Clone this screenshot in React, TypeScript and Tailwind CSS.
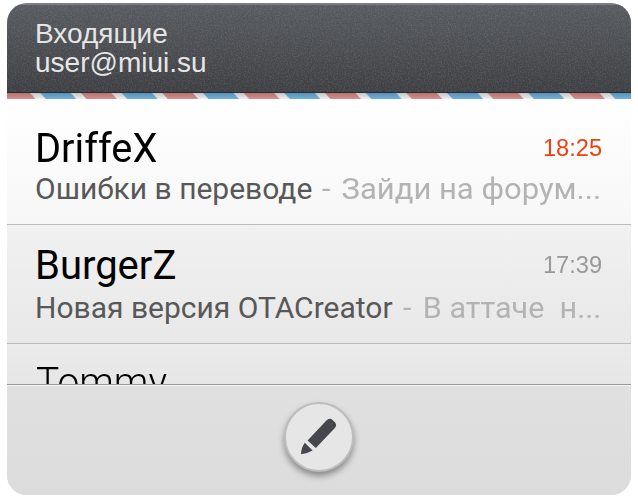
import React from "react";

function Header() {
  return (
    <header className="relative h-[90px] shrink-0 border-t-2 border-b border-t-[#7b7f83] border-b-[#2b2c2f] bg-linear-to-b from-[#575b5f] to-[#3d3e42] pt-[14px] pl-[28px] font-['Liberation_Sans',sans-serif] text-[28px] leading-[29px] text-[#e6e6e6]">
      <svg className="absolute inset-0 h-full w-full opacity-20" aria-hidden="true">
        <filter id="grain">
          <feTurbulence type="fractalNoise" baseFrequency="0.7" numOctaves="2" seed="4" />
          <feColorMatrix values="0 0 0 0 0.62  0 0 0 0 0.66  0 0 0 0 0.68  1.6 0 0 0 -0.6" />
        </filter>
        <rect width="100%" height="100%" filter="url(#grain)" />
      </svg>
      <div className="relative w-max">Входящие</div>
      <div className="relative w-max">user@miui.su</div>
    </header>
  );
}

function AirmailStripe() {
  return (
    <svg className="block h-[6px] w-full shrink-0" aria-hidden="true">
      <defs>
        <pattern id="airmail" x="-7.4" width="81.35" height="6" patternUnits="userSpaceOnUse">
          <path d="M0 0H30.5L36 6H5.5Z" fill="#dd918e" />
          <path d="M40.7 0H71.2L76.7 6H46.2Z" fill="#70b5e4" />
        </pattern>
        <linearGradient id="stripeShade" x2="0" y2="1">
          <stop stopColor="#000" stopOpacity="0.2" />
          <stop offset="1" stopColor="#000" stopOpacity="0.02" />
        </linearGradient>
      </defs>
      <rect width="100%" height="6" fill="#f4f4f4" />
      <rect width="7" height="6" fill="#dd918e" />
      <rect width="100%" height="6" fill="url(#airmail)" />
      <rect width="100%" height="6" fill="url(#stripeShade)" />
    </svg>
  );
}

type MailProps = {
  name: string;
  time: string;
  subject: string;
  preview: string;
  className: string;
  timeClass: string;
  nameClass: string;
  lineClass: string;
  subjectClass: string;
  previewClass: string;
};

function Mail(p: MailProps) {
  return (
    <article className={"shrink-0 border-b border-[#bcbcbc] pr-[29px] pl-[28px] font-[Roboto,sans-serif] " + p.className}>
      <div className="flex h-[46px] items-center justify-between">
        <h2 className={"origin-left text-[40px] leading-[46px] whitespace-nowrap text-black " + p.nameClass}>{p.name}</h2>
        <time className={"origin-right scale-x-[0.985] pb-[2px] font-['Liberation_Sans',sans-serif] text-[24px] leading-[44px] " + p.timeClass}>{p.time}</time>
      </div>
      <div className={"flex h-[34px] text-[30px] leading-[34px] whitespace-pre " + p.lineClass}>
        <span className={"shrink-0 text-[#585858] " + p.subjectClass}>{p.subject}</span>
        <span className="shrink-0 text-[#b3b3b3]">-</span>
        <span className={"mr-px ml-auto w-max shrink-0 text-[#b3b3b3] " + p.previewClass}>{p.preview}</span>
      </div>
    </article>
  );
}

export default function App() {
  return (
    <div className="h-[504px] w-[638px] overflow-hidden bg-white pt-[3px] pl-[7px]">
      <main className="flex h-[492px] w-[624px] flex-col overflow-hidden rounded-[20px] bg-[#dedede]">
        <Header />
        <AirmailStripe />
        <Mail
          name="DriffeX" time="18:25" subject="Ошибки в переводе" preview="Зайди на форум..."
          className="h-[126px] bg-linear-to-b from-white to-[#f7f7f7] pt-[27px]"
          timeClass="text-[#f04010]" nameClass="scale-x-[0.993]" lineClass="" subjectClass="w-[287px]" previewClass="origin-right scale-x-[1.034]"
        />
        <Mail
          name="BurgerZ" time="17:39" subject="Новая версия OTACreator" preview="В аттаче  н..."
          className="h-[119px] bg-linear-to-b from-[#f1f1f1] to-[#e8e8e8] pt-[18px]"
          timeClass="text-[#999999]" nameClass="" lineClass="mt-[2px]" subjectClass="w-[368px]" previewClass="origin-right scale-x-[1.018]"
        />
        <article className="h-[41px] shrink-0 overflow-hidden border-b border-[#999999] bg-linear-to-b from-[#ebebeb] to-[#e6e6e6] px-[29px] pt-[16px] font-[Roboto,sans-serif]">
          <h2 className="w-max origin-left scale-x-[0.975] text-[40px] leading-[46px] font-light text-black">Tommy</h2>
        </article>
        <footer className="flex flex-1 justify-center border-t border-[#f3f3f3] bg-linear-to-b from-[#e0e0e0] to-[#dcdcdc] pt-[16px]">
          <button aria-label="Написать" className="mr-[1px] flex h-[70px] w-[70px] items-center justify-center rounded-full border-2 border-[#bdbdbd] bg-[#e6e6e6] shadow-[0_4px_6px_rgba(0,0,0,0.38)]">
            <svg className="h-[66px] w-[66px]" viewBox="286 404 66 66" fill="#46474c" aria-hidden="true">
              <path d="M307.6 440.6 326.4 420.5Q329.5 417.3 332.8 420.2L334.8 422.3Q337.5 425.2 334.6 428.3L315.8 448Z" />
              <path d="M304.8 442.8 312.6 450.6Q307.5 453.7 301 454.2Q301.2 447.5 304.8 442.8Z" />
            </svg>
          </button>
        </footer>
      </main>
    </div>
  );
}
